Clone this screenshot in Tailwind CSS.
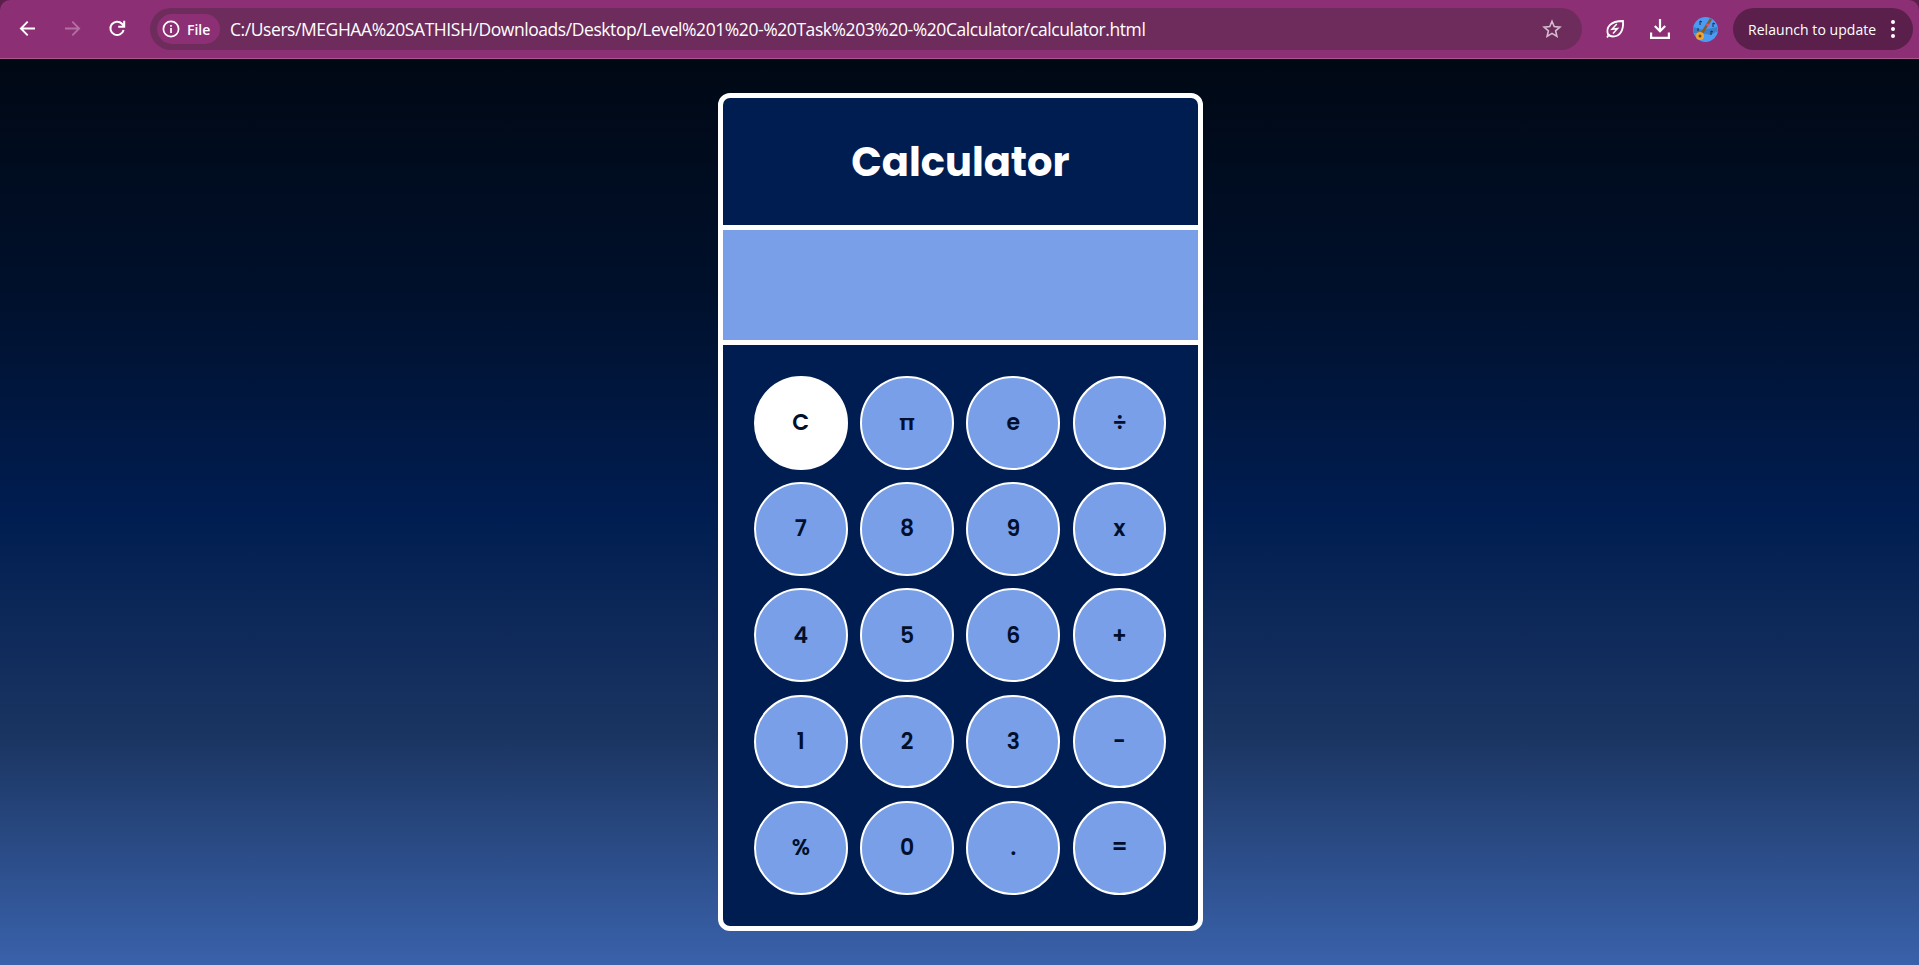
<!DOCTYPE html>
<html lang="en">
<head>
<meta charset="utf-8">
<title>Calculator</title>
<script src="https://cdn.jsdelivr.net/npm/@tailwindcss/browser@4"></script>
</head>
<body class="flex h-screen flex-col overflow-hidden bg-[#5a1f4b] font-['Open_Sans','Noto_Sans',sans-serif]">
<header class="flex h-[59px] shrink-0 items-center rounded-t-[10px] border-b border-[#a8588f] bg-[#8d2f74] pr-[6px] pl-[17px] text-white">
  <svg class="size-5 shrink-0" viewBox="0 0 20 20" fill="none" stroke="currentColor" stroke-width="1.9"><path d="M18 9.500H4M10.700 2.700 3.900 9.500l6.800 6.800"/></svg>
  <svg class="ml-[25px] size-5 shrink-0 text-[#b56ea2]" viewBox="0 0 20 20" fill="none" stroke="currentColor" stroke-width="1.9"><path d="M3 9.500h14M10.300 2.700l6.800 6.800-6.800 6.800"/></svg>
  <svg class="ml-[25px] size-5 shrink-0" viewBox="0 0 20 20" fill="none" stroke="currentColor" stroke-width="2"><path d="M16.600 11A6.700 6.700 0 1 1 15 4.800L17 7M17.200 1.800v6h-6"/></svg>
  <div class="ml-[23px] flex h-[42px] w-[1433px] items-center rounded-full bg-[#6d2c5c] pr-[20px] pl-[7px]">
    <div class="flex h-[30px] w-[63px] shrink-0 items-center rounded-full bg-[#8d2f74] pl-[5px]">
      <svg class="size-[18px]" viewBox="0 0 18 18" fill="none" stroke="currentColor" stroke-width="1.7"><circle cx="9" cy="9" r="7.6"/><path d="M9 8v5M9 5v1.7"/></svg>
      <span class="ml-[7px] text-[14px] font-semibold">File</span>
    </div>
    <span class="ml-[10px] text-[17.5px] tracking-[-0.43px] whitespace-nowrap">C:/Users/MEGHAA%20SATHISH/Downloads/Desktop/Level%201%20-%20Task%203%20-%20Calculator/calculator.html</span>
    <svg class="ml-auto size-5 text-[#d5bccf]" viewBox="0 0 20 20" fill="none" stroke="currentColor" stroke-width="1.6"><path d="m10 2.300 2.200 5.300 5.700.5-4.300 3.700 1.300 5.600-4.900-3-4.900 3 1.300-5.600L2.100 8.100l5.700-.5z"/></svg>
  </div>
  <svg class="ml-[23px] size-5 shrink-0" viewBox="0 0 20 20" fill="none" stroke="currentColor" stroke-width="1.8"><path d="M3 15.500C.8 8.500 5 2 18 2c.8 10-3.500 15.500-10 15.500-2 0-3.700-.7-5-2ZM4.500 15 2 18.500"/><path d="m11.800 5-4.800 5.300 5.500-.8L8 14.600" stroke-width="1.5"/></svg>
  <svg class="ml-[25px] size-5 shrink-0" viewBox="0 0 20 20" fill="none" stroke="currentColor" stroke-width="2.200"><path d="M10 0v12M4.800 7 10 12.200 15.200 7M1.100 13.500v5.400h17.800v-5.400"/></svg>
  <svg class="ml-[23px] size-[25px] shrink-0" viewBox="0 0 25 25"><circle cx="12.500" cy="12.500" r="12.500" fill="#4b9bf5"/><path d="M0 10l10 3 14-3 .8 4-7 4-10-2-7 0Z" fill="#3a7fc8"/><path d="m7 19 11-17" stroke="#8a5a24" stroke-width="2.600"/><circle cx="7" cy="19" r="4" fill="#f0a52c"/><circle cx="7" cy="19" r="1.500" fill="#7b4314"/><circle cx="15" cy="8" r="1.600" fill="#e0507a"/><path d="M7 8V4l2 1M20 10V6l2 1M18 18v-4l2 1M5 14v-3" stroke="#182740" fill="none"/></svg>
  <div class="ml-[15px] flex h-[42px] w-[180px] shrink-0 items-center rounded-full bg-[#5a1f4b] pl-[15px]">
    <span class="text-[14px] tracking-[0.05px] whitespace-nowrap">Relaunch to update</span>
    <svg class="mr-[18px] ml-auto h-5 w-1" viewBox="0 0 4 20" fill="currentColor"><circle cx="2" cy="3" r="2"/><circle cx="2" cy="10" r="2"/><circle cx="2" cy="17" r="2"/></svg>
  </div>
</header>
<main class="flex flex-1 items-start justify-center bg-linear-[180deg,#000814_0%,#00102b_25%,#001d51_50%,#1b3562_75%,#3a62ab_100%] pt-[34px] pl-[2px]">
  <section class="flex h-[838px] w-[485px] flex-col rounded-xl border-[5px] border-white bg-[#001d51] font-[Poppins,Inter,sans-serif]">
    <div class="flex h-[132px] items-center justify-center border-b-[5px] border-white">
      <h1 class="text-[40px] font-bold text-white">Calculator</h1>
    </div>
    <div class="h-[115px] border-b-[5px] border-white bg-[#789fe8]"></div>
    <div class="grid flex-1 auto-rows-[93.75px] grid-cols-[repeat(4,93.75px)] content-start gap-[12.5px] pt-[30.8px] pl-[30.9px] text-[22px] font-semibold text-[#000f2b] *:flex *:items-center *:justify-center *:rounded-full *:border-2 *:border-white">
      <button class="bg-white">C</button><button class="bg-[#789fe8]">π</button><button class="bg-[#789fe8]">e</button><button class="bg-[#789fe8]">÷</button>
      <button class="bg-[#789fe8]">7</button><button class="bg-[#789fe8]">8</button><button class="bg-[#789fe8]">9</button><button class="bg-[#789fe8]">x</button>
      <button class="bg-[#789fe8]">4</button><button class="bg-[#789fe8]">5</button><button class="bg-[#789fe8]">6</button><button class="bg-[#789fe8]">+</button>
      <button class="bg-[#789fe8]">1</button><button class="bg-[#789fe8]">2</button><button class="bg-[#789fe8]">3</button><button class="bg-[#789fe8]">-</button>
      <button class="bg-[#789fe8]">%</button><button class="bg-[#789fe8]">0</button><button class="bg-[#789fe8]">.</button><button class="bg-[#789fe8]">=</button>
    </div>
  </section>
</main>
</body>
</html>
